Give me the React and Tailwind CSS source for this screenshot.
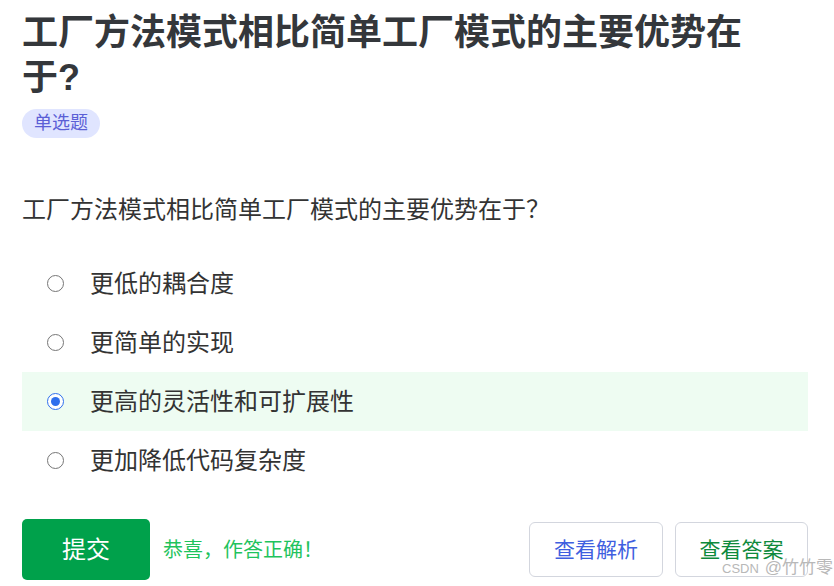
import React, { useState } from 'react';

const options = [
  '更低的耦合度',
  '更简单的实现',
  '更高的灵活性和可扩展性',
  '更加降低代码复杂度',
];

const Radio = ({ checked }) => (
  <span
    className={`flex h-[17px] w-[17px] flex-shrink-0 items-center justify-center rounded-full border-[1.5px] bg-white ${
      checked ? 'border-[#2f6fed]' : 'border-[#767676]'
    }`}
  >
    {checked && <span className="h-[9px] w-[9px] rounded-full bg-[#2f6fed]" />}
  </span>
);

const App = () => {
  const [selected, setSelected] = useState(2);

  return (
    <div
      className="relative h-[586px] w-[834px] overflow-hidden bg-white pl-[22px] pr-[26px] pt-[10px] text-[#333333]"
      style={{ fontFamily: '"Liberation Sans", "Noto Sans CJK SC", sans-serif' }}
    >
      {/* Title */}
      <h1 className="max-w-[740px] text-[36px] font-bold leading-[45px] text-[#34373b]">
        工厂方法模式相比简单工厂模式的主要优势在于?
      </h1>
      <div className="mt-[9px] flex">
        <span className="flex h-[29px] items-center rounded-full bg-[#e0e5ff] px-3 text-[18px] text-[#5b5fd6]">
          单选题
        </span>
      </div>

      {/* Question */}
      <p className="mt-[54px] text-[24px] leading-[36px] text-[#333333]">
        工厂方法模式相比简单工厂模式的主要优势在于？
      </p>

      {/* Options */}
      <div className="mt-[26px] flex flex-col">
        {options.map((opt, i) => (
          <div
            key={opt}
            onClick={() => setSelected(i)}
            className={`flex h-[59px] cursor-pointer items-center gap-[26px] pl-[25px] ${
              selected === i ? 'bg-[#eefcf2]' : ''
            }`}
          >
            <Radio checked={selected === i} />
            <span className="text-[24px] leading-[30px] text-[#333333]">{opt}</span>
          </div>
        ))}
      </div>

      {/* Actions */}
      <div className="mt-[29px] flex h-[61px] items-center">
        <button className="flex h-[61px] w-[128px] items-center justify-center rounded-[5px] bg-[#00a14b] text-[24px] text-white">
          提交
        </button>
        <span className="ml-[13px] text-[20px] text-[#1fc35d]">恭喜，作答正确！</span>
        <div className="ml-auto flex gap-3">
          <button className="flex h-[55px] w-[134px] items-center justify-center rounded-[6px] border border-[#d3d6de] bg-white text-[21px] text-[#3f5fe0]">
            查看解析
          </button>
          <button className="flex h-[55px] w-[133px] items-center justify-center rounded-[6px] border border-[#d3d6de] bg-white text-[21px] text-[#0f8a3c]">
            查看答案
          </button>
        </div>
      </div>

      {/* Watermark */}
      <span className="pointer-events-none absolute bottom-[6px] left-[722px] flex items-baseline gap-[6px] text-[#b8b8b8]">
        <span className="text-[13px]">CSDN</span>
        <span className="text-[17px]">@竹竹零</span>
      </span>
    </div>
  );
};

export default App;
